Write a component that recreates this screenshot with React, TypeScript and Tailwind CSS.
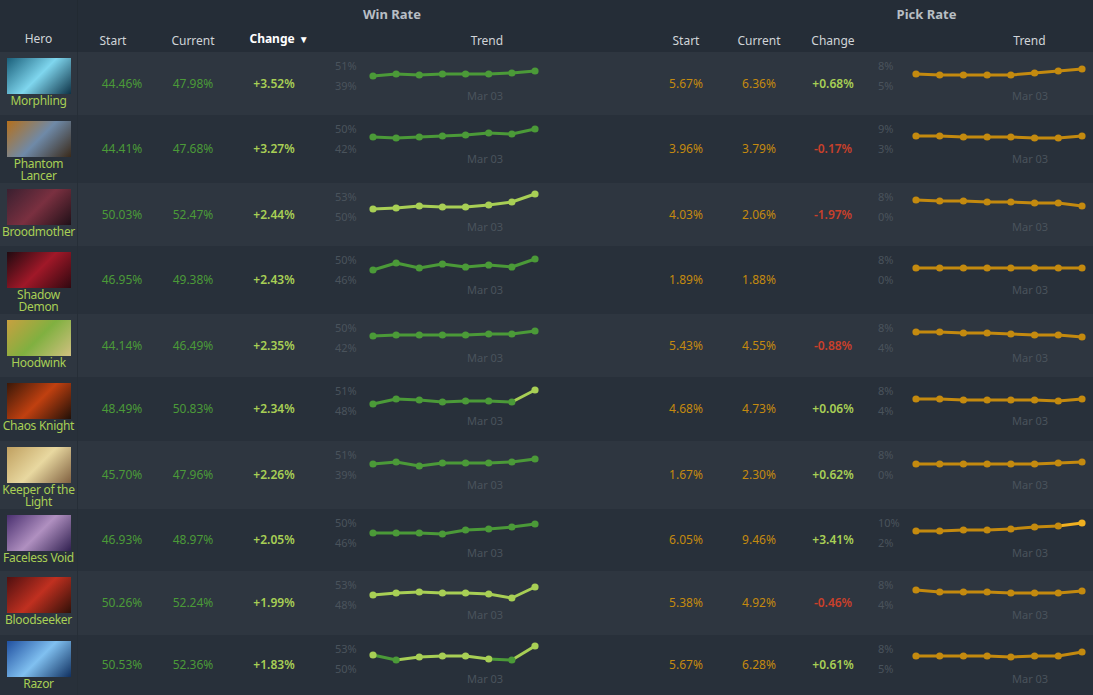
import React from "react";

const G = "#4b9a38", LG = "#a8cf55", OR = "#c48a0f", RD = "#c9402b";

type Row = { name: string[]; h: number; img: string; ws: string; wc: string; wch: string; wl: [string, string]; wp: number[]; wbright: boolean[]; ps: string; pc: string; pch: string; pl: [string, string]; pp: number[]; lastHi?: boolean };

const rows: Row[] = [
  { name: ["Morphling"], h: 63, img: "linear-gradient(135deg,#1a5f7a,#7fd6ee,#0e3347)", ws: "44.46%", wc: "47.98%", wch: "+3.52%", wl: ["51%", "39%"], wp: [16, 14, 15, 14, 14, 14, 13, 11], wbright: [], ps: "5.67%", pc: "6.36%", pch: "+0.68%", pl: ["8%", "5%"], pp: [14, 15, 15, 15, 15, 13, 11, 9] },
  { name: ["Phantom", "Lancer"], h: 68, img: "linear-gradient(135deg,#b5701c,#6f8aa8,#3a2a1a)", ws: "44.41%", wc: "47.68%", wch: "+3.27%", wl: ["50%", "42%"], wp: [14, 15, 14, 13, 12, 10, 11, 6], wbright: [], ps: "3.96%", pc: "3.79%", pch: "-0.17%", pl: ["9%", "3%"], pp: [13, 13, 14, 14, 14, 15, 15, 13] },
  { name: ["Broodmother"], h: 63, img: "linear-gradient(135deg,#3a2030,#7a3040,#201018)", ws: "50.03%", wc: "52.47%", wch: "+2.44%", wl: ["53%", "50%"], wp: [18, 17, 15, 16, 16, 14, 11, 3], wbright: [true, true, true, true, true, true, true, true], ps: "4.03%", pc: "2.06%", pch: "-1.97%", pl: ["8%", "0%"], pp: [9, 10, 10, 11, 11, 12, 12, 15] },
  { name: ["Shadow", "Demon"], h: 68, img: "linear-gradient(135deg,#200a10,#a01828,#300810)", ws: "46.95%", wc: "49.38%", wch: "+2.43%", wl: ["50%", "46%"], wp: [16, 9, 14, 10, 13, 11, 13, 5], wbright: [], ps: "1.89%", pc: "1.88%", pch: "", pl: ["8%", "0%"], pp: [14, 14, 14, 14, 14, 14, 14, 14] },
  { name: ["Hoodwink"], h: 63, img: "linear-gradient(135deg,#c8a040,#80b040,#d0c080)", ws: "44.14%", wc: "46.49%", wch: "+2.35%", wl: ["50%", "42%"], wp: [14, 13, 13, 13, 13, 12, 12, 9], wbright: [], ps: "5.43%", pc: "4.55%", pch: "-0.88%", pl: ["8%", "4%"], pp: [10, 10, 11, 11, 12, 13, 13, 15] },
  { name: ["Chaos Knight"], h: 64, img: "linear-gradient(135deg,#3a1808,#c04010,#201008)", ws: "48.49%", wc: "50.83%", wch: "+2.34%", wl: ["51%", "48%"], wp: [19, 14, 15, 17, 16, 16, 17, 5], wbright: [false, false, false, false, false, false, false, true], ps: "4.68%", pc: "4.73%", pch: "+0.06%", pl: ["8%", "4%"], pp: [14, 14, 15, 15, 15, 15, 16, 14] },
  { name: ["Keeper of the", "Light"], h: 68, img: "linear-gradient(135deg,#c0a060,#e8d8a0,#806040)", ws: "45.70%", wc: "47.96%", wch: "+2.26%", wl: ["51%", "39%"], wp: [15, 13, 17, 14, 14, 14, 13, 10], wbright: [], ps: "1.67%", pc: "2.30%", pch: "+0.62%", pl: ["8%", "0%"], pp: [15, 15, 15, 15, 15, 15, 14, 13] },
  { name: ["Faceless Void"], h: 62, img: "linear-gradient(135deg,#4a3070,#b090c0,#302050)", ws: "46.93%", wc: "48.97%", wch: "+2.05%", wl: ["50%", "46%"], wp: [16, 16, 16, 17, 13, 12, 10, 7], wbright: [], ps: "6.05%", pc: "9.46%", pch: "+3.41%", pl: ["10%", "2%"], pp: [14, 14, 13, 13, 12, 10, 9, 6], lastHi: true },
  { name: ["Bloodseeker"], h: 64, img: "linear-gradient(135deg,#501010,#c03020,#301008)", ws: "50.26%", wc: "52.24%", wch: "+1.99%", wl: ["53%", "48%"], wp: [16, 14, 13, 14, 14, 15, 19, 8], wbright: [true, true, true, true, true, true, true, true], ps: "5.38%", pc: "4.92%", pch: "-0.46%", pl: ["8%", "4%"], pp: [11, 13, 13, 13, 14, 14, 14, 12] },
  { name: ["Razor"], h: 60, img: "linear-gradient(135deg,#2050a0,#80c0f0,#103060)", ws: "50.53%", wc: "52.36%", wch: "+1.83%", wl: ["53%", "50%"], wp: [12, 17, 14, 13, 13, 16, 17, 3], wbright: [true, false, true, true, true, true, false, true], ps: "5.67%", pc: "6.28%", pch: "+0.61%", pl: ["8%", "5%"], pp: [13, 13, 13, 13, 14, 13, 13, 9] },
];

function Chart({ pts, color, bright, hi, w }: { pts: number[]; color: string; bright?: boolean[]; hi?: boolean; w: number }) {
  const step = (w - 8) / 7;
  const xy = pts.map((y, i) => [4 + i * step, y + 3]);
  return (
    <svg width={w} height={26} className="block">
      {xy.slice(1).map((p, i) => {
        const c = hi && i === 6 ? "#f0b020" : bright && bright[i + 1] ? LG : color;
        return <line key={i} x1={xy[i][0]} y1={xy[i][1]} x2={p[0]} y2={p[1]} stroke={c} strokeWidth={3} />;
      })}
      {xy.map((p, i) => {
        const c = hi && i === 7 ? "#f0b020" : bright && bright[i] ? LG : color;
        return <circle key={i} cx={p[0]} cy={p[1]} r={3.6} fill={c} />;
      })}
    </svg>
  );
}

function Trend({ labels, pts, color, bright, hi, w, mar }: { labels: [string, string]; pts: number[]; color: string; bright?: boolean[]; hi?: boolean; w: number; mar: string }) {
  return (
    <div className="flex h-full">
      <div className="flex flex-col pt-[4px] text-[11px] leading-[20px] text-[#4a535c] w-[34px]">
        <span>{labels[0]}</span>
        <span>{labels[1]}</span>
      </div>
      <div className="flex flex-col pt-[5px]">
        <Chart pts={pts} color={color} bright={bright} hi={hi} w={w} />
        <span className={`text-[11px] text-[#4a535c] mt-[5px] ${mar}`}>Mar 03</span>
      </div>
    </div>
  );
}

export default function App() {
  return (
    <div className="w-[1093px] h-[695px] overflow-hidden bg-[#28303a] text-[12px]" style={{ fontFamily: "'Noto Sans', 'Open Sans', sans-serif" }}>
      <div className="bg-[#252d37] h-[52px] flex text-[#d0d4d8]">
        <div className="w-[78px] flex items-end justify-center pb-[4px] border-r border-[#222a32]">Hero</div>
        <div className="w-[572px] flex flex-col">
          <div className="h-[30px] flex items-center justify-center font-bold text-[#b8bec4] text-[13px] pl-[56px]">Win Rate</div>
          <div className="flex flex-1 items-center">
            <div className="w-[70px] text-center">Start</div>
            <div className="w-[90px] text-center">Current</div>
            <div className="w-[82px] text-center text-white font-bold flex items-center justify-center gap-1 -mt-[4px]">Change <span className="text-[10px]">▼</span></div>
            <div className="flex-1 text-center pl-[4px]">Trend</div>
          </div>
        </div>
        <div className="flex-1 flex flex-col">
          <div className="h-[30px] flex items-center justify-center font-bold text-[#b8bec4] text-[13px] pl-[110px]">Pick Rate</div>
          <div className="flex flex-1 items-center">
            <div className="w-[72px] text-center">Start</div>
            <div className="w-[74px] text-center">Current</div>
            <div className="w-[74px] text-center">Change</div>
            <div className="flex-1 text-center pl-[96px]">Trend</div>
          </div>
        </div>
      </div>
      {rows.map((r, i) => (
        <div key={i} className={`flex ${i % 2 === 0 ? "bg-[#2e3640]" : "bg-[#28303a]"}`} style={{ height: r.h }}>
          <div className="w-[78px] flex flex-col items-center pt-[6px] border-r border-[#262e37]">
            <div className="w-[64px] h-[36px] shrink-0" style={{ background: r.img }} />
            <div className="text-[#a8cf55] text-[12px] leading-[12px] text-center mt-[1px] tracking-[-0.3px]">
              {r.name.map((n, j) => <div key={j} className="h-[12px] overflow-visible">{n}</div>)}
            </div>
          </div>
          <div className="w-[88px] flex items-center justify-center" style={{ color: G }}>{r.ws}</div>
          <div className="w-[54px] flex items-center justify-center" style={{ color: G }}>{r.wc}</div>
          <div className="w-[108px] flex items-center justify-center font-semibold" style={{ color: LG }}>{r.wch}</div>
          <div className="w-[322px] pl-[7px]">
            <Trend labels={r.wl} pts={r.wp} color={G} bright={r.wbright} w={170} mar="ml-[98px]" />
          </div>
          <div className="w-[72px] flex items-center justify-center" style={{ color: OR }}>{r.ps}</div>
          <div className="w-[74px] flex items-center justify-center" style={{ color: OR }}>{r.pc}</div>
          <div className="w-[74px] flex items-center justify-center font-semibold" style={{ color: r.pch.startsWith("-") ? RD : LG }}>{r.pch}</div>
          <div className="flex-1 pl-[8px]">
            <Trend labels={r.pl} pts={r.pp} color={OR} hi={r.lastHi} w={174} mar="ml-[100px]" />
          </div>
        </div>
      ))}
    </div>
  );
}
